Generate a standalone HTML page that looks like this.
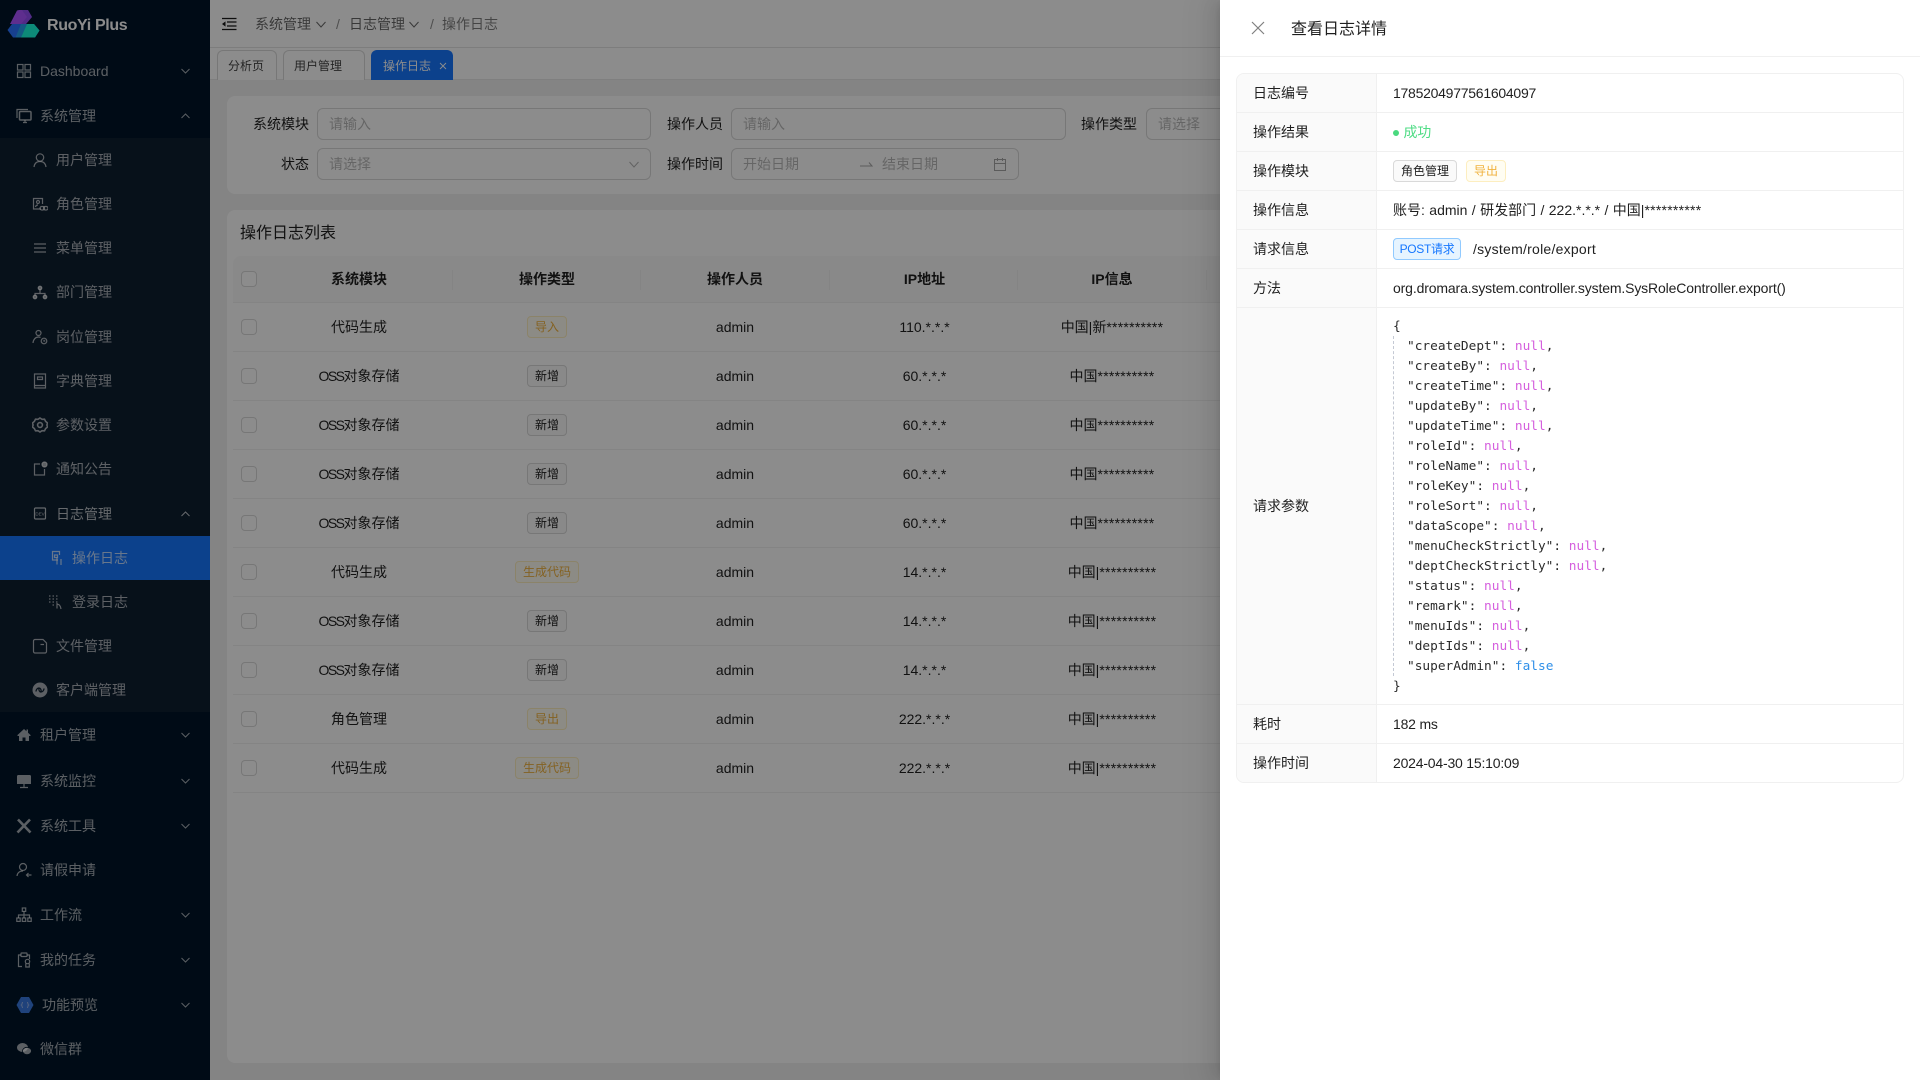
<!DOCTYPE html>
<html lang="zh-CN"><head><meta charset="utf-8"><title>操作日志</title>
<style>
*{box-sizing:border-box}
html,body{margin:0;padding:0;width:1920px;height:1080px;overflow:hidden;background:#f0f0f0;
font-family:"Liberation Sans","Noto Sans CJK SC",sans-serif;font-size:14px;color:rgba(0,0,0,.88)}
.a{position:absolute;white-space:nowrap}
#side{position:absolute;left:0;top:0;width:210px;height:1080px;background:#001529;color:rgba(255,255,255,.65)}
#sub{position:absolute;left:0;top:138px;width:210px;height:574px;background:#0d1f31}
.m{position:absolute;left:0;width:210px;height:44px;line-height:44px;white-space:nowrap}
.t0{padding-left:40px}.t1{padding-left:56px}.t2{padding-left:72px}
.m svg.i{position:absolute;top:14px;width:16px;height:16px;fill:none;stroke:currentColor;stroke-width:1.2}
.i0{left:16px}.i1{left:32px}.i2{left:48px}
.m svg.c{position:absolute;left:181px;top:19px;width:9px;height:6px;fill:none;stroke:currentColor;stroke-width:1}
#top{position:absolute;left:210px;top:0;width:1710px;height:48px;background:#fff;border-bottom:1px solid #e4e4e4}
#tabs{position:absolute;left:210px;top:48px;width:1710px;height:32px;background:#fff;border-bottom:1px solid #e8e8e8}
.tab{position:absolute;top:50px;height:30px;border:1px solid #d9d9d9;border-bottom:0;border-radius:6px 6px 0 0;font-size:12px;line-height:30px;color:rgba(0,0,0,.75);background:#fff}
.card{position:absolute;background:#fff;border-radius:8px}
.lb{position:absolute;white-space:nowrap;line-height:32px;color:rgba(0,0,0,.88)}
.ip{position:absolute;height:32px;border:1px solid #d9d9d9;border-radius:6px;background:#fff;line-height:30px;padding-left:11px;color:rgba(0,0,0,.28);white-space:nowrap;overflow:hidden}
.r{position:absolute;left:233px;width:1000px;height:49px;border-bottom:1px solid #f0f0f0;line-height:48px}
.r .x,.h .x{position:absolute;top:0;text-align:center;white-space:nowrap}
.c1{left:33px;width:186px}.c2{left:220px;width:188px}.c3{left:408px;width:188px}.c4{left:597px;width:189px}.c5{left:785px;width:188px}
.cb{position:absolute;left:8px;width:16px;height:16px;border:1px solid #d9d9d9;border-radius:4px;background:#fff;top:16px}
.h{position:absolute;left:233px;top:256px;width:1000px;height:47px;background:#fafafa;border-bottom:1px solid #f0f0f0;border-radius:8px 0 0 0;line-height:46px;font-weight:600}
.h i{position:absolute;top:14px;height:20px;width:1px;background:#f0f0f0}
.tag{display:inline-block;height:22px;line-height:20px;padding:0 7px;font-size:12px;border:1px solid #d9d9d9;border-radius:4px;background:#fafafa;color:rgba(0,0,0,.88);vertical-align:top;margin-top:13px;font-weight:400}
.dv .tag{margin-top:8px}
.w{background:#fffdf2;border-color:#fdeec0;color:#f0b23e}
.bl{background:#e6f4ff;border-color:#91caff;color:#1677ff}
.s{letter-spacing:.25px}
.o{letter-spacing:-1.5px}
#mask{position:absolute;left:0;top:0;width:1920px;height:1080px;background:rgba(0,0,0,.45)}
#dw{position:absolute;left:1220px;top:0;width:700px;height:1080px;background:#fff;box-shadow:-6px 0 16px 0 rgba(0,0,0,.08),-3px 0 6px -4px rgba(0,0,0,.12),-9px 0 28px 8px rgba(0,0,0,.05)}
#d{position:absolute;left:1236px;top:73px;width:668px;height:710px;border:1px solid #f0f0f0;border-radius:8px;overflow:hidden}
.dr{position:absolute;left:0;width:666px;border-bottom:1px solid #f0f0f0;line-height:38px}
.dl{position:absolute;left:0;top:0;bottom:0;width:140px;background:#fafafa;border-right:1px solid #f0f0f0;padding-left:16px;white-space:nowrap}
.dv{position:absolute;left:156px;top:0;white-space:nowrap;letter-spacing:-.2px}
.dv .tag{letter-spacing:0}
.code{position:absolute;left:1393px;white-space:pre;font-family:"DejaVu Sans Mono","Liberation Mono",monospace;font-size:12.8px;line-height:20px;height:20px;color:#2b2b2b}
.n{color:#d55fde}.f{color:#2f8fe8}
</style></head><body>

<div id="side">
<div class="a" style="left:47px;top:14px;font-size:16px;font-weight:700;line-height:24px;color:#fff;letter-spacing:-.35px">RuoYi Plus</div>
<div id="sub"></div>

<div class="m t0" style="top:49px"><svg class="i i0" viewBox="0 0 16 16"><rect x="1.5" y="1.5" width="5.5" height="5.5"/><rect x="9" y="1.5" width="5.5" height="5.5"/><rect x="1.5" y="9" width="5.5" height="5.5"/><rect x="9" y="9" width="5.5" height="5.5"/></svg>Dashboard<svg class="c" viewBox="0 0 9 6"><path d="M.5 1l4 4 4-4"/></svg></div>
<div class="m t0" style="top:94px"><svg class="i i0" viewBox="0 0 16 16"><path d="M1 10V1.5h11"/><rect x="3.5" y="3.5" width="11.5" height="8.5" rx="1" stroke-width="1.5"/><path d="M9 12v2M7 14.5h4"/></svg>系统管理<svg class="c" viewBox="0 0 9 6"><path d="M.5 5l4-4 4 4"/></svg></div>

<div class="m t1" style="top:138px"><svg class="i i1" viewBox="0 0 16 16"><circle cx="8" cy="5.500" r="3.700"/><path d="M2 15c.5-3.500 2.500-5.500 6-5.500s5.500 2 6 5.500"/></svg>用户管理</div>
<div class="m t1" style="top:182px"><svg class="i i1" viewBox="0 0 16 16"><path d="M9 13H1.500V2.500h9V8"/><circle cx="6" cy="6" r="1.500"/><path d="M3.500 11c.3-1.500 1-2 2.500-2"/><rect x="8" y="10.500" width="4.500" height="3.500" rx="1.700"/><rect x="11.500" y="10.500" width="4.500" height="3.500" rx="1.700"/></svg>角色管理</div>
<div class="m t1" style="top:226px"><svg class="i i1" viewBox="0 0 16 16"><path d="M2 4h12M2 8h12M2 12h12" stroke-width="1.300"/></svg>菜单管理</div>
<div class="m t1" style="top:270px"><svg class="i i1" viewBox="0 0 16 16"><circle cx="8" cy="4" r="1.800" fill="currentColor"/><circle cx="3" cy="13" r="1.800" fill="currentColor"/><circle cx="13" cy="13" r="1.800" fill="currentColor"/><path d="M8 5v4M3 12v-2.500h10V12"/></svg>部门管理</div>
<div class="m t1" style="top:315px"><svg class="i i1" viewBox="0 0 16 16"><circle cx="6.500" cy="4" r="2.500"/><path d="M1 14c.3-3.500 2.500-6 5.500-6 1 0 1.500.2 2 .5"/><circle cx="12" cy="12" r="2.800"/><path d="M12 10.800V12h1.200"/></svg>岗位管理</div>
<div class="m t1" style="top:359px"><svg class="i i1" viewBox="0 0 16 16"><path d="M2.500 1h11v14h-11zM2.500 12.500h11"/><path d="M5.500 4h5v2.500h-5z"/></svg>字典管理</div>
<div class="m t1" style="top:403px"><svg class="i i1" viewBox="0 0 16 16"><path d="M8 1l2 1.300 2.500-.1 1.100 2.200 1.900 1.600-.6 2 .6 2-1.900 1.600-1.100 2.200-2.500-.1L8 15l-2-1.300-2.500.1-1.100-2.200L.5 10l.6-2-.6-2 1.900-1.600 1.100-2.200 2.500.1z" stroke-width="1.600"/><circle cx="8" cy="8" r="2.400" stroke-width="1.600"/></svg>参数设置</div>
<div class="m t1" style="top:447px"><svg class="i i1" viewBox="0 0 16 16"><path d="M8 3H2.500v11h10V8"/><circle cx="12.500" cy="3.500" r="2.500" fill="currentColor"/></svg>通知公告</div>
<div class="m t1" style="top:492px;color:rgba(255,255,255,.72)"><svg class="i i1" viewBox="0 0 16 16"><rect x="2.500" y="2" width="11" height="11" rx="1"/><text x="8" y="9.500" font-size="4.500" text-anchor="middle" fill="currentColor" stroke="none" font-family="Liberation Sans">DEV</text></svg>日志管理<svg class="c" viewBox="0 0 9 6"><path d="M.5 5l4-4 4 4"/></svg></div>
<div class="m t2" style="top:536px;background:#1677ff;color:rgba(255,255,255,.72)"><svg class="i i2" viewBox="0 0 16 16"><path d="M10 10H4.500V1.500h7V5"/><path d="M6.500 5h3v2.500h-3z"/><path d="M9 7.500v7M13 9v6"/></svg>操作日志</div>
<div class="m t2" style="top:580px"><svg class="i i2" viewBox="0 0 16 16"><path d="M1 2h1.500M4.500 2H6M8 2h1.500M1 5h1.500M4.500 5H6M8 5h1.500M1 8h1.500M4.500 8H6M8 8h1.500M4.500 11H6" stroke-width="1.300"/><path d="M9 9v5.500M9 10.500c2-.5 3.500 1 4 4.500"/></svg>登录日志</div>
<div class="m t1" style="top:624px"><svg class="i i1" viewBox="0 0 16 16"><path d="M3 1.500h8l3.500 3.500v8.500a1.500 1.500 0 0 1-1.500 1.500H3a1.500 1.500 0 0 1-1.500-1.500V3A1.500 1.500 0 0 1 3 1.500z"/><path d="M8.500 6.500h3.500"/></svg>文件管理</div>
<div class="m t1" style="top:668px"><svg class="i i1" viewBox="0 0 16 16"><circle cx="8" cy="8" r="7.500" fill="currentColor" stroke="none"/><path d="M4 9.500c0-2 1.500-3.500 3-3.500s2.500 2 2 3.500M12 6.500c0 2-1.500 3.500-3 3.500s-2.500-2-2-3.500" stroke="#0d1f31" stroke-width="1.300"/></svg>客户端管理</div>

<div class="m t0" style="top:713px"><svg class="i i0" viewBox="0 0 16 16"><path d="M8 2L1.500 8v1H3v5h3.500v-3.500h3V14H13V9h1.500V8L12 5.700V2.500h-1.500v1.800z" fill="currentColor" stroke="none"/></svg>租户管理<svg class="c" viewBox="0 0 9 6"><path d="M.5 1l4 4 4-4"/></svg></div>
<div class="m t0" style="top:759px"><svg class="i i0" viewBox="0 0 16 16"><path d="M2 2h12a1.500 1.500 0 0 1 1 1v8H1V3a1.500 1.500 0 0 1 1-1z" fill="currentColor" stroke="none"/><path d="M8 11v3M4 14.500h8"/></svg>系统监控<svg class="c" viewBox="0 0 9 6"><path d="M.5 1l4 4 4-4"/></svg></div>
<div class="m t0" style="top:804px"><svg class="i i0" viewBox="0 0 16 16"><path d="M2 1.500l12.500 13M14 1.500L1.500 14.500" stroke-width="2.600"/></svg>系统工具<svg class="c" viewBox="0 0 9 6"><path d="M.5 1l4 4 4-4"/></svg></div>
<div class="m t0" style="top:848px"><svg class="i i0" viewBox="0 0 16 16"><circle cx="7" cy="5" r="3.500"/><path d="M1 14c.3-3 2.500-5 6-5"/><path d="M15.500 13h-5M12.500 11l-2 2 2 2"/></svg>请假申请</div>
<div class="m t0" style="top:893px"><svg class="i i0" viewBox="0 0 16 16"><rect x="6.300" y="1" width="3.400" height="3.400"/><rect x=".8" y="11" width="3.400" height="3.400"/><rect x="6.300" y="11" width="3.400" height="3.400"/><rect x="11.800" y="11" width="3.400" height="3.400"/><path d="M8 4.500V11M2.500 11V8h11v3"/></svg>工作流<svg class="c" viewBox="0 0 9 6"><path d="M.5 1l4 4 4-4"/></svg></div>
<div class="m t0" style="top:938px"><svg class="i i0" viewBox="0 0 16 16"><path d="M6 14.500H2.500V3H5M11 3h2.500v4"/><rect x="5" y="1" width="6" height="3.500" rx=".5"/><circle cx="11.500" cy="9.500" r="2.200"/><path d="M9.800 11.500v3.500h3.500v-3.500"/></svg>我的任务<svg class="c" viewBox="0 0 9 6"><path d="M.5 1l4 4 4-4"/></svg></div>
<div class="m t0" style="top:983px;padding-left:42px"><svg class="i" style="left:16px;top:13px;width:18px;height:18px" viewBox="0 0 18 18"><path d="M5 1h8l4.500 8-4.500 8H5L.5 9z" fill="#3a78e0" stroke="none"/><path d="M7 6.500c-1 0-1 .8-1 1.500s-.7 1-.7 1 .7.300.7 1 0 1.500 1 1.500M11 6.500c1 0 1 .8 1 1.500s.7 1 .7 1-.7.300-.7 1 0 1.500-1 1.500" stroke="#9db8ea" stroke-width=".9"/></svg>功能预览<svg class="c" viewBox="0 0 9 6"><path d="M.5 1l4 4 4-4"/></svg></div>
<div class="m t0" style="top:1027px"><svg class="i i0" viewBox="0 0 16 16"><ellipse cx="6.500" cy="6.500" rx="5.500" ry="4.500" fill="currentColor" stroke="none"/><ellipse cx="11" cy="10" rx="4.500" ry="3.700" fill="currentColor" stroke="#001529" stroke-width=".8"/></svg>微信群</div>
</div>

<div id="top"></div>
<svg class="a" style="left:222px;top:17px" width="15" height="14" viewBox="0 0 15 14" fill="none" stroke="#1a1a1a" stroke-width="1.200"><path d="M0 1.500h14.500M5 5h9.500M5 9h9.500M0 12.500h14.500"/><path d="M0 7l3.500-2.600v5.200z" fill="#1a1a1a" stroke="none"/></svg>
<div class="a" style="left:255px;top:14px;line-height:20px;color:rgba(0,0,0,.6)">系统管理</div>
<svg class="a" style="left:316px;top:21px" width="10" height="7" viewBox="0 0 10 7" fill="none" stroke="rgba(0,0,0,.6)"><path d="M.5 1l4.500 5 4.500-5"/></svg>
<div class="a" style="left:336px;top:14px;line-height:20px;color:rgba(0,0,0,.45)">/</div>
<div class="a" style="left:349px;top:14px;line-height:20px;color:rgba(0,0,0,.6)">日志管理</div>
<svg class="a" style="left:409px;top:21px" width="10" height="7" viewBox="0 0 10 7" fill="none" stroke="rgba(0,0,0,.6)"><path d="M.5 1l4.500 5 4.500-5"/></svg>
<div class="a" style="left:430px;top:14px;line-height:20px;color:rgba(0,0,0,.45)">/</div>
<div class="a" style="left:442px;top:14px;line-height:20px;color:rgba(0,0,0,.5)">操作日志</div>

<div id="tabs"></div>
<div class="tab" style="left:217px;width:60px;padding-left:10px">分析页</div>
<div class="tab" style="left:283px;width:82px;padding-left:10px">用户管理</div>
<div class="tab" style="left:371px;width:82px;padding-left:11px;background:#1677ff;border-color:#1677ff;color:#fff">操作日志<svg class="a" style="left:67px;top:11px" width="8" height="8" viewBox="0 0 8 8" stroke="#fff" stroke-width=".9"><path d="M1 1l6 6M7 1L1 7"/></svg></div>

<div class="card" style="left:227px;top:96px;width:1693px;height:98px"></div>
<div class="lb" style="left:253px;top:108px">系统模块</div>
<div class="ip" style="left:317px;top:108px;width:334px">请输入</div>
<div class="lb" style="left:667px;top:108px">操作人员</div>
<div class="ip" style="left:731px;top:108px;width:335px">请输入</div>
<div class="lb" style="left:1081px;top:108px">操作类型</div>
<div class="ip" style="left:1146px;top:108px;width:200px">请选择</div>
<div class="lb" style="left:281px;top:148px">状态</div>
<div class="ip" style="left:317px;top:148px;width:334px">请选择</div>
<svg class="a" style="left:629px;top:161px" width="10" height="7" viewBox="0 0 10 7" fill="none" stroke="rgba(0,0,0,.3)"><path d="M.5 1l4.500 5 4.500-5"/></svg>
<div class="lb" style="left:667px;top:148px">操作时间</div>
<div class="ip" style="left:731px;top:148px;width:288px">开始日期</div>
<div class="a" style="left:882px;top:148px;line-height:32px;color:rgba(0,0,0,.28)">结束日期</div>
<svg class="a" style="left:859px;top:161px" width="14" height="6" viewBox="0 0 14 6" fill="none" stroke="rgba(0,0,0,.35)"><path d="M1 5h12L10 1.500"/></svg>
<svg class="a" style="left:993px;top:157px" width="14" height="14" viewBox="0 0 14 14" fill="none" stroke="rgba(0,0,0,.35)"><path d="M1.500 2.500h11v11h-11zM1.500 6.500h11M4.500 1v3M9.500 1v3"/></svg>

<div class="card" style="left:227px;top:210px;width:1693px;height:853px"></div>
<div class="a" style="left:240px;top:222px;font-size:16px;line-height:24px">操作日志列表</div>

<div class="h"><div class="cb" style="top:15px"></div>
<div class="x c1">系统模块</div><i style="left:219px"></i><div class="x c2">操作类型</div><i style="left:407px"></i><div class="x c3">操作人员</div><i style="left:596px"></i><div class="x c4">IP地址</div><i style="left:784px"></i><div class="x c5">IP信息</div><i style="left:973px"></i></div>

<div class="r" style="top:303px"><div class="cb"></div><div class="x c1">代码生成</div><div class="x c2"><span class="tag w">导入</span></div><div class="x c3">admin</div><div class="x c4">110.*.*.*</div><div class="x c5">中国|新<span class="s">**********</span></div></div>
<div class="r" style="top:352px"><div class="cb"></div><div class="x c1"><span class="o">OSS</span>对象存储</div><div class="x c2"><span class="tag">新增</span></div><div class="x c3">admin</div><div class="x c4">60.*.*.*</div><div class="x c5">中国<span class="s">**********</span></div></div>
<div class="r" style="top:401px"><div class="cb"></div><div class="x c1"><span class="o">OSS</span>对象存储</div><div class="x c2"><span class="tag">新增</span></div><div class="x c3">admin</div><div class="x c4">60.*.*.*</div><div class="x c5">中国<span class="s">**********</span></div></div>
<div class="r" style="top:450px"><div class="cb"></div><div class="x c1"><span class="o">OSS</span>对象存储</div><div class="x c2"><span class="tag">新增</span></div><div class="x c3">admin</div><div class="x c4">60.*.*.*</div><div class="x c5">中国<span class="s">**********</span></div></div>
<div class="r" style="top:499px"><div class="cb"></div><div class="x c1"><span class="o">OSS</span>对象存储</div><div class="x c2"><span class="tag">新增</span></div><div class="x c3">admin</div><div class="x c4">60.*.*.*</div><div class="x c5">中国<span class="s">**********</span></div></div>
<div class="r" style="top:548px"><div class="cb"></div><div class="x c1">代码生成</div><div class="x c2"><span class="tag w">生成代码</span></div><div class="x c3">admin</div><div class="x c4">14.*.*.*</div><div class="x c5">中国|<span class="s">**********</span></div></div>
<div class="r" style="top:597px"><div class="cb"></div><div class="x c1"><span class="o">OSS</span>对象存储</div><div class="x c2"><span class="tag">新增</span></div><div class="x c3">admin</div><div class="x c4">14.*.*.*</div><div class="x c5">中国|<span class="s">**********</span></div></div>
<div class="r" style="top:646px"><div class="cb"></div><div class="x c1"><span class="o">OSS</span>对象存储</div><div class="x c2"><span class="tag">新增</span></div><div class="x c3">admin</div><div class="x c4">14.*.*.*</div><div class="x c5">中国|<span class="s">**********</span></div></div>
<div class="r" style="top:695px"><div class="cb"></div><div class="x c1">角色管理</div><div class="x c2"><span class="tag w">导出</span></div><div class="x c3">admin</div><div class="x c4">222.*.*.*</div><div class="x c5">中国|<span class="s">**********</span></div></div>
<div class="r" style="top:744px"><div class="cb"></div><div class="x c1">代码生成</div><div class="x c2"><span class="tag w">生成代码</span></div><div class="x c3">admin</div><div class="x c4">222.*.*.*</div><div class="x c5">中国|<span class="s">**********</span></div></div>

<div id="mask"></div>

<svg class="a" style="left:7px;top:9px" width="33" height="30" viewBox="0 0 33 30"><path d="M10 1.500L12 1h9l4 7-6 7H3z" fill="#5e2e8e"/><path d="M15 1h6l4 7-6 7h-5l6-7z" fill="#4a2a80" opacity=".6"/><path d="M5 15h22l5.500 6.500L28 28.500H6L.5 21z" fill="#17408e"/><path d="M14 15h6l-6 13.500H8.500z" fill="#155a84"/><path d="M20 15h7l5.500 6.500L28 28.500H14z" fill="#0d8a78"/></svg>

<div id="dw"></div>
<svg class="a" style="left:1251px;top:21px" width="14" height="14" viewBox="0 0 14 14" stroke="rgba(0,0,0,.5)" stroke-width="1.200"><path d="M1 1l12 12M13 1L1 13"/></svg>
<div class="a" style="left:1291px;top:18px;font-size:16px;line-height:24px;color:rgba(0,0,0,.88)">查看日志详情</div>
<div class="a" style="left:1220px;top:56px;width:700px;height:1px;background:#f0f0f0"></div>

<div id="d">
<div class="dr" style="top:0;height:39px"><div class="dl">日志编号</div><div class="dv" style="letter-spacing:-.26px">1785204977561604097</div></div>
<div class="dr" style="top:39px;height:39px"><div class="dl">操作结果</div><div class="dv"><span class="a" style="left:0;top:17px;width:6px;height:6px;border-radius:3px;background:#4ad97f"></span><span style="padding-left:10.500px;color:#4fdc85">成功</span></div></div>
<div class="dr" style="top:78px;height:39px"><div class="dl">操作模块</div><div class="dv"><span class="tag">角色管理</span><span class="tag w" style="margin-left:9px">导出</span></div></div>
<div class="dr" style="top:117px;height:39px"><div class="dl">操作信息</div><div class="dv" style="letter-spacing:0;word-spacing:.5px">账号: admin / 研发部门 / 222.*.*.* / 中国|<span class="s">**********</span></div></div>
<div class="dr" style="top:156px;height:39px"><div class="dl">请求信息</div><div class="dv" style="letter-spacing:0"><span class="tag bl" style="width:68px;padding:0;text-align:center;letter-spacing:-.3px">POST请求</span><span style="margin-left:12px;letter-spacing:.25px">/system/role/export</span></div></div>
<div class="dr" style="top:195px;height:39px"><div class="dl">方法</div><div class="dv" style="letter-spacing:-.14px">org.dromara.system.controller.system.SysRoleController.export()</div></div>
<div class="dr" style="top:234px;height:397px;line-height:396px"><div class="dl">请求参数</div></div>
<div class="dr" style="top:631px;height:39px"><div class="dl">耗时</div><div class="dv">182 ms</div></div>
<div class="dr" style="top:670px;height:39px;border-bottom:0"><div class="dl">操作时间</div><div class="dv">2024-04-30 15:10:09</div></div>
</div>

<div class="a" style="left:1393px;top:336px;height:340px;border-left:1px dashed #c4c9d4"></div>
<div class="code" style="top:317px">{</div>
<div class="code" style="top:337px;left:1407px">"createDept": <span class="n">null</span>,</div>
<div class="code" style="top:357px;left:1407px">"createBy": <span class="n">null</span>,</div>
<div class="code" style="top:377px;left:1407px">"createTime": <span class="n">null</span>,</div>
<div class="code" style="top:397px;left:1407px">"updateBy": <span class="n">null</span>,</div>
<div class="code" style="top:417px;left:1407px">"updateTime": <span class="n">null</span>,</div>
<div class="code" style="top:437px;left:1407px">"roleId": <span class="n">null</span>,</div>
<div class="code" style="top:457px;left:1407px">"roleName": <span class="n">null</span>,</div>
<div class="code" style="top:477px;left:1407px">"roleKey": <span class="n">null</span>,</div>
<div class="code" style="top:497px;left:1407px">"roleSort": <span class="n">null</span>,</div>
<div class="code" style="top:517px;left:1407px">"dataScope": <span class="n">null</span>,</div>
<div class="code" style="top:537px;left:1407px">"menuCheckStrictly": <span class="n">null</span>,</div>
<div class="code" style="top:557px;left:1407px">"deptCheckStrictly": <span class="n">null</span>,</div>
<div class="code" style="top:577px;left:1407px">"status": <span class="n">null</span>,</div>
<div class="code" style="top:597px;left:1407px">"remark": <span class="n">null</span>,</div>
<div class="code" style="top:617px;left:1407px">"menuIds": <span class="n">null</span>,</div>
<div class="code" style="top:637px;left:1407px">"deptIds": <span class="n">null</span>,</div>
<div class="code" style="top:657px;left:1407px">"superAdmin": <span class="f">false</span></div>
<div class="code" style="top:677px">}</div>
</body></html>
